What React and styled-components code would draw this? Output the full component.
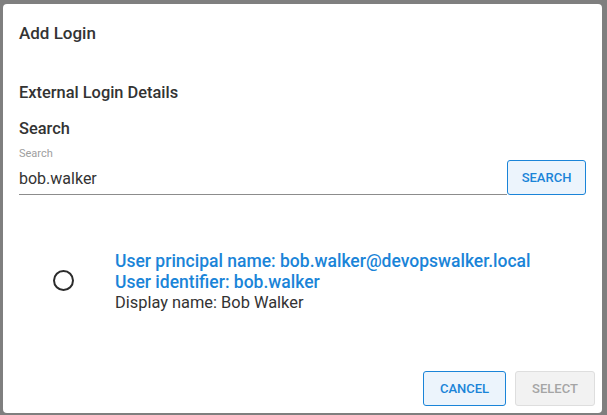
import styled, { createGlobalStyle } from 'styled-components';

const GlobalStyle = createGlobalStyle`
  html, body {
    margin: 0;
    padding: 0;
    background: #7f7f7f;
    font-family: Roboto, "Liberation Sans", sans-serif;
  }
  * {
    box-sizing: border-box;
  }
`;

const result = {
  principal: 'bob.walker@devopswalker.local',
  identifier: 'bob.walker',
  displayName: 'Bob Walker',
};

const App = () => {
  return (
    <Backdrop>
      <GlobalStyle />
      <Dialog>
        <Title>Add Login</Title>
        <Body>
          <SectionTitle $top={38}>External Login Details</SectionTitle>
          <SectionTitle $top={16}>Search</SectionTitle>
          <SearchRow>
            <Field>
              <FieldLabel>Search</FieldLabel>
              <Input defaultValue="bob.walker" />
            </Field>
            <Button $variant="outline">Search</Button>
          </SearchRow>
          <ResultRow>
            <Radio />
            <ResultText>
              <Strong>User principal name: {result.principal}</Strong>
              <Strong>User identifier: {result.identifier}</Strong>
              <Plain>Display name: {result.displayName}</Plain>
            </ResultText>
          </ResultRow>
        </Body>
        <Footer>
          <Button $variant="outline" $width={83}>Cancel</Button>
          <Button $variant="disabled" $width={80}>Select</Button>
        </Footer>
      </Dialog>
    </Backdrop>
  );
};

const Backdrop = styled.div`
  width: 607px;
  height: 415px;
  padding: 4px 5px 2px 3px;
  background: #7f7f7f;
`;

const Dialog = styled.div`
  width: 599px;
  height: 409px;
  display: flex;
  flex-direction: column;
  background: #fff;
  border-radius: 4px;
  color: #333;
`;

const Title = styled.div`
  padding: 17px 16px 0;
  font-size: 17px;
  line-height: 24px;
  font-weight: 500;
  color: #333;
`;

const Body = styled.div`
  flex: 1;
  padding: 0 16px;
  display: flex;
  flex-direction: column;
`;

const SectionTitle = styled.div`
  margin-top: ${(p) => p.$top}px;
  font-size: 16.4px;
  line-height: 20px;
  font-weight: 500;
  color: #333;
`;

const SearchRow = styled.div`
  margin-top: 8px;
  display: flex;
  align-items: flex-end;
`;

const Field = styled.label`
  flex: 1;
  display: flex;
  flex-direction: column;
`;

const FieldLabel = styled.span`
  font-size: 11px;
  line-height: 14px;
  color: #9e9e9e;
`;

const Input = styled.input`
  border: none;
  border-bottom: 1px solid #8c8c8c;
  outline: none;
  padding: 7px 0 6px;
  font-family: inherit;
  font-size: 16px;
  line-height: 20px;
  height: 34px;
  color: #333;
  background: transparent;
`;

const Button = styled.button`
  width: ${(p) => p.$width || 79}px;
  height: 35px;
  border-radius: 3px;
  font-family: inherit;
  font-size: 13px;
  font-weight: 500;
  text-transform: uppercase;
  cursor: pointer;
  border: 1px solid ${(p) => (p.$variant === 'disabled' ? '#dedede' : '#1a84d8')};
  background: ${(p) => (p.$variant === 'disabled' ? '#f2f2f2' : '#ecf4fc')};
  color: ${(p) => (p.$variant === 'disabled' ? '#a5a5a5' : '#1a84d8')};
`;

const ResultRow = styled.div`
  margin-top: 56px;
  display: flex;
  align-items: center;
  gap: 41px;
  padding-left: 34px;
`;

const Radio = styled.span`
  width: 21px;
  height: 21px;
  margin-top: -4px;
  border: 2px solid #2b2b2b;
  border-radius: 50%;
  flex-shrink: 0;
`;

const ResultText = styled.div`
  display: flex;
  flex-direction: column;
`;

const Strong = styled.div`
  font-size: 17.5px;
  line-height: 21px;
  font-weight: 500;
  color: #1a84d8;
`;

const Plain = styled.div`
  font-size: 16.4px;
  line-height: 20px;
  color: #333;
`;

const Footer = styled.div`
  display: flex;
  justify-content: flex-end;
  gap: 9px;
  padding: 0 7px 7px;
`;

export default App;
